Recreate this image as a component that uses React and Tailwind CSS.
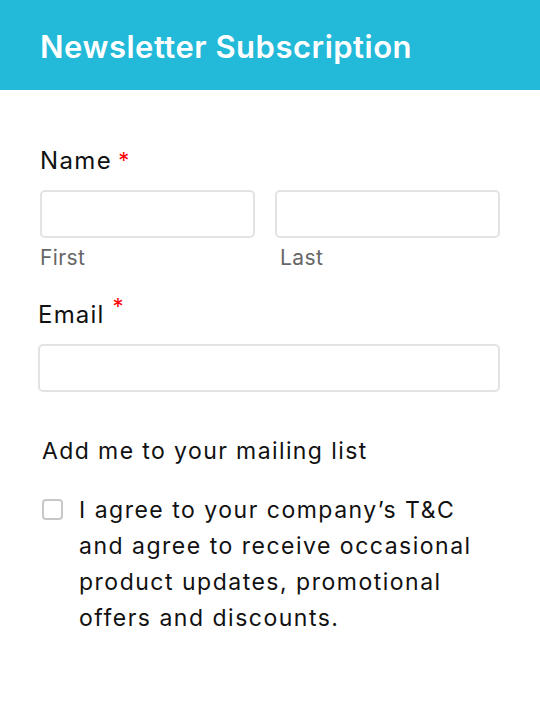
import React from 'react';

const font = { fontFamily: 'Inter, "Open Sans", sans-serif' };

export default function App() {
    return (
        <div className="w-[540px] h-[718px] bg-white" style={font}>
            <div className="h-[90px] bg-[#23b9d9] flex items-center pl-10">
                <h1 className="text-white text-[31px] font-semibold tracking-[0.5px] leading-none mt-[2px]">
                    Newsletter Subscription
                </h1>
            </div>

            <div className="pt-[59px] px-10">
                <div className="text-[24px] tracking-[1.4px] text-[#111] leading-none flex items-start">
                    Name
                    <span className="text-[#f00] text-[22px] tracking-normal ml-1.5">*</span>
                </div>
                <div className="mt-[17px] flex gap-5">
                    <div className="w-[216px]">
                        <input className="w-full h-12 border-2 border-[#e3e3e3] rounded-[5px] outline-none block" />
                        <div className="mt-[9px] text-[21px] tracking-[0.4px] text-[#666] leading-none">First</div>
                    </div>
                    <div className="w-[226px]">
                        <input className="w-full h-12 border-2 border-[#e3e3e3] rounded-[5px] outline-none block" />
                        <div className="mt-[9px] ml-[5px] text-[21px] tracking-[0.4px] text-[#666] leading-none">Last</div>
                    </div>
                </div>

                <div className="-ml-0.5 mt-[35px] text-[24px] tracking-[1.2px] text-[#111] leading-none flex items-start">
                    Email
                    <span className="text-[#f00] text-[22px] tracking-normal ml-2 -mt-[8px]">*</span>
                </div>
                <input className="-ml-0.5 mt-[17px] w-[462px] h-12 border-2 border-[#e3e3e3] rounded-[5px] outline-none block" />

                <div className="ml-0.5 mt-[48px] text-[23px] tracking-[1.4px] text-[#111] leading-none">
                    Add me to your mailing list
                </div>

                <label className="ml-0.5 mt-[29px] flex items-start gap-4">
                    <span className="mt-[7px] w-[21px] h-[21px] shrink-0 border-2 border-[#c8c8c8] rounded-[4px] bg-white" />
                    <span className="text-[23px] tracking-[1.5px] text-[#111] leading-[36px]">
                        I agree to your company’s T&amp;C<br />
                        and agree to receive occasional<br />
                        product updates, promotional<br />
                        offers and discounts.
                    </span>
                </label>
            </div>
        </div>
    );
}
